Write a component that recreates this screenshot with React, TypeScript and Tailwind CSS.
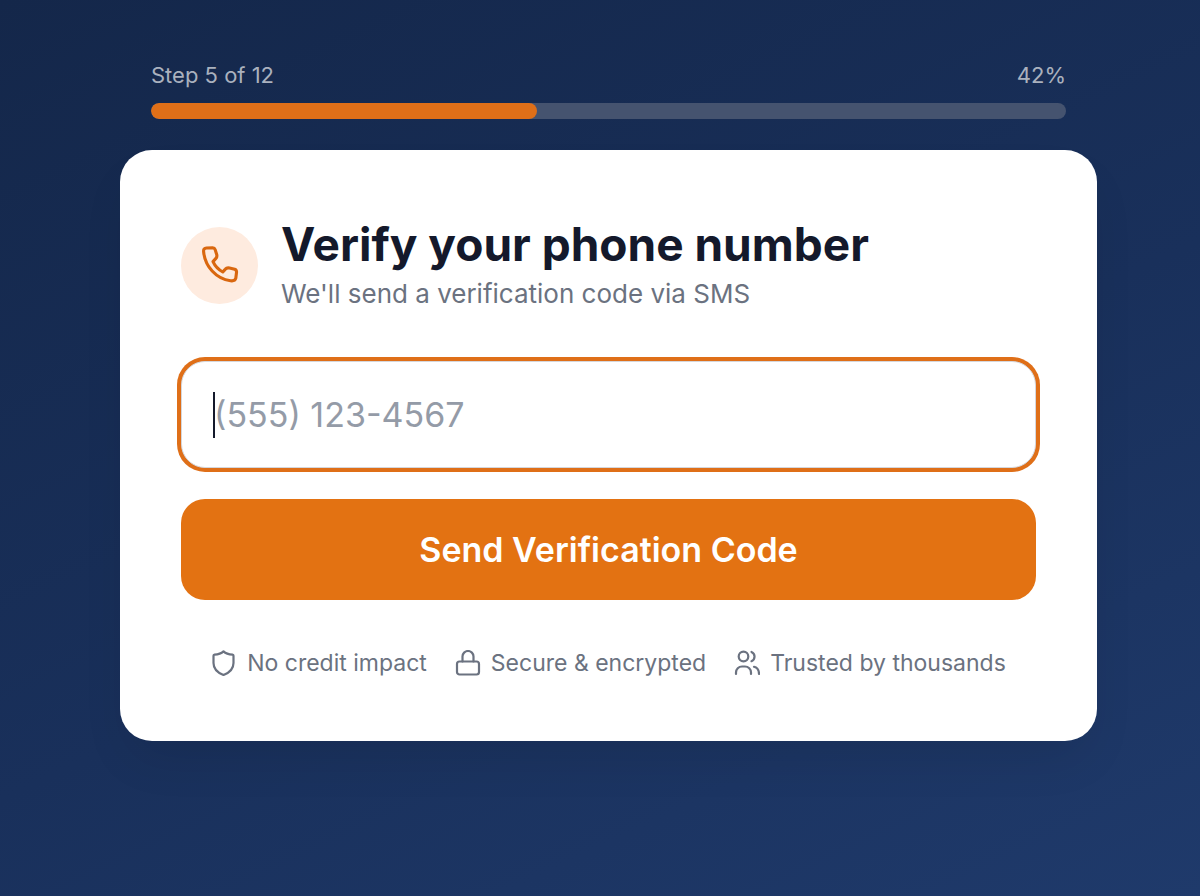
import type { ReactNode } from "react";

function TrustIcon({ children }: { children: ReactNode }) {
  return (
    <svg
      viewBox="0 0 26 26"
      className="size-[26px] shrink-0"
      fill="none"
      stroke="currentColor"
      strokeWidth="2.2"
      strokeLinecap="round"
      strokeLinejoin="round"
      aria-hidden="true"
    >
      {children}
    </svg>
  );
}

const trust = [
  {
    label: "No credit impact",
    shape: <path d="M12.500 1.400C10.500 3.300 7 4.500 3.500 4.700Q2.500 4.800 2.500 5.800V13c0 6 3.700 9.600 10 12 6.300-2.400 10-6 10-12V5.800Q22.500 4.800 21.500 4.700C18 4.500 14.500 3.300 12.500 1.400z" />,
  },
  {
    label: "Secure & encrypted",
    shape: (
      <>
        <rect x="2" y="11.5" width="22" height="13" rx="2.5" />
        <path d="M7.500 11.500V6.500a5.500 5.500 0 0 1 11 0v5" />
      </>
    ),
  },
  {
    label: "Trusted by thousands",
    shape: (
      <>
        <circle cx="9.5" cy="6.5" r="4.8" />
        <path d="M17.500 2a5 5 0 0 1 0 9.200" />
        <path d="M2 24v-1.500a6 6 0 0 1 6-6h3a6 6 0 0 1 6 6V24" />
        <path d="M20 16.800c3 .7 5 3 5 7.200" />
      </>
    ),
  },
];

export default function App() {
  return (
    <main className="min-h-screen bg-[linear-gradient(155deg,#14274a,#19305b_55%,#1f3a6b)] pt-[59px] pr-[103px] pb-16 pl-[120px] font-['Inter',sans-serif]">
      <div className="px-[31px]">
        <div className="flex justify-between text-[22px] leading-8 text-[#aab1be]">
          <span id="step">Step 5 of 12</span>
          <span>42%</span>
        </div>
        <div
          role="progressbar"
          aria-labelledby="step"
          aria-valuenow={42}
          aria-valuemin={0}
          aria-valuemax={100}
          className="mt-3 h-4 overflow-hidden rounded-full bg-[#45536f]"
        >
          <div className="h-full w-[42.2%] rounded-full bg-[#df6f18]" />
        </div>
      </div>

      <section className="mt-[31px] rounded-[32px] bg-white px-[61px] pt-[68px] pb-[62px] shadow-2xl shadow-black/10">
        <header className="flex items-center gap-[23px]">
          <div className="flex size-[77px] shrink-0 items-center justify-center rounded-full bg-[#feebdf] text-[#d9670f]">
            <svg
              viewBox="0 0 48 48"
              className="size-12"
              fill="none"
              stroke="currentColor"
              strokeWidth="3.1"
              strokeLinejoin="round"
              aria-hidden="true"
            >
              <path d="M10.500 7C8.300 7.200 7.400 8.500 7.600 10.500C8.900 25.500 20.200 37.800 34.500 39.800C37.200 40.200 39.200 39.400 39.800 37.200L40.500 31.500C40.700 29.700 40.200 28.800 38.700 28.300L33.500 27C31.800 26.600 30.400 26.900 29.400 28.100L26.800 31C22.500 28.600 18.900 24.800 17 20.600L19.900 17.400C20.900 16.300 21.100 15 20.700 13.500L19.100 8.600C18.700 7.400 17.900 6.900 16.600 6.800Z" />
            </svg>
          </div>
          <div>
            <h1 className="text-[46px] leading-[52px] font-bold text-[#14192b]">Verify your phone number</h1>
            <p className="mt-1.5 text-[26px] leading-9 text-[#6b7280]">We'll send a verification code via SMS</p>
          </div>
        </header>

        <form className="mt-[49px]" onSubmit={(e) => e.preventDefault()}>
          <div className="relative">
            <input
              type="tel"
              aria-label="Phone number"
              placeholder="(555) 123-4567"
              className="block h-[107px] w-full rounded-3xl border border-[#d5d7dc] bg-white px-8 text-[34px] text-[#14192b] caret-transparent ring-4 ring-[#df6f18] outline-none placeholder:text-[#949ba7]"
            />
            <span className="pointer-events-none absolute top-[31px] left-8 h-[46px] w-0.5 bg-[#14192b]" />
          </div>
          <button
            type="submit"
            className="mt-[31px] block h-[101px] w-full rounded-3xl bg-[#e37212] text-[34px] font-semibold text-white"
          >
            Send Verification Code
          </button>
        </form>

        <ul className="mt-[47px] flex justify-center gap-7 text-[23px] leading-8 whitespace-nowrap text-[#6b7280]">
          {trust.map(({ label, shape }) => (
            <li key={label} className="flex items-center gap-2.5">
              <TrustIcon>{shape}</TrustIcon>
              {label}
            </li>
          ))}
        </ul>
      </section>
    </main>
  );
}
